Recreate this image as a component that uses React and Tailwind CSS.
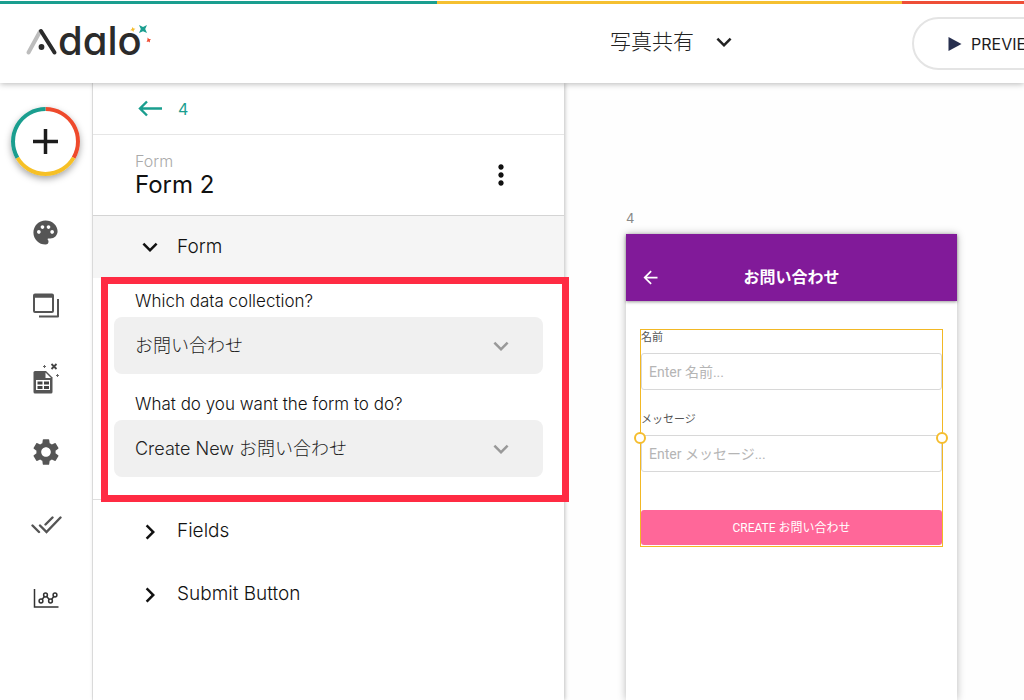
import React, { useState } from "react";
import {
  MdArrowBack,
  MdChevronRight,
  MdExpandMore,
  MdMoreVert,
  MdPalette,
  MdSettings,
} from "react-icons/md";

/* ---------------- ICONS ---------------- */

const Logo = () => (
  <div className="flex items-start text-[#2b2b2b]">
    <svg width="33" height="38" viewBox="0 0 33 38" fill="none" strokeWidth="4" strokeLinecap="round">
      <path d="M3.500 32.500 L15 11.500" stroke="#bdbdbd" />
      <path d="M16 11 L29.500 32.500" stroke="#2b2b2b" />
      <circle cx="16.500" cy="27" r="2.900" fill="#2b2b2b" />
    </svg>
    <span className="font-medium text-[40px] leading-[42px] [font-feature-settings:'cv11','ss03']">dalo</span>
    <svg width="24" height="24" viewBox="0 0 24 24" className="-ml-3.5">
      <path d="M4.500 7 L5.600 8.400 L7.500 8.800 L5.900 10 L5.400 12 L4.200 10.500 L2.200 10.300 L3.800 9 Z" fill="#f5bd2e" />
      <path d="M11 5 L15 7 L19 5 L17.200 9 L19 13 L15 11.200 L11 13 L12.800 9 Z" fill="#1a9e8f" />
      <path d="M19.600 17.600 L21 19 L23 19.200 L21.800 20.600 L22 22.600 L20.400 21.600 L18.600 22 L19.400 20 Z" fill="#ee4a30" />
    </svg>
  </div>
);

const ScreensIcon = () => (
  <svg width="28" height="26" viewBox="0 0 28 26" fill="none" stroke="#555" strokeWidth="2">
    <rect x="2" y="1.500" width="19" height="17.500" rx="1" />
    <path d="M2 3 H21" strokeWidth="3.500" />
    <path d="M7 23.500 H26 V6" strokeLinejoin="round" />
  </svg>
);

const DataIcon = () => (
  <svg width="28" height="34" viewBox="0 0 28 34">
    <path d="M3 9 H14 L20.500 15.500 V30 Q20.500 31.500 19 31.500 H3 Q1.500 31.500 1.500 30 V10.500 Q1.500 9 3 9 Z" fill="#555" />
    <path d="M13.500 10.500 V16 H19 Z" fill="#fff" />
    <rect x="4" y="18" width="14" height="10" fill="#fff" />
    <path d="M5.500 19.500 h5 v3 h-5z M12 19.500 h5 v3 h-5z M5.500 24 h5 v3 h-5z M12 24 h5 v3 h-5z" fill="#444" />
    <path d="M19.500 2 L24.500 7 M24.500 2 L19.500 7" stroke="#444" strokeWidth="1.800" />
    <path d="M12.500 3 v3 M11 4.500 h3 M25.500 12 v3 M24 13.500 h3" stroke="#666" strokeWidth="1" />
  </svg>
);

const PublishIcon = () => (
  <svg width="32" height="20" viewBox="0 0 32 20" fill="none" stroke="#555" strokeWidth="2.4" strokeLinecap="round">
    <path d="M2.500 10.500 L9 17 M10 10.500 L16.500 17 L30.500 2.500 M15.500 9.500 L22.500 2.500" />
  </svg>
);

const AnalyticsIcon = () => (
  <svg width="28" height="22" viewBox="0 0 28 22" fill="none" stroke="#333" strokeWidth="1.5">
    <path d="M2.500 2 V20 H26.500" />
    <path d="M10 12.500 L12.500 9.500 M14.700 9.500 L17.300 12.500 M19.500 12.500 L21.600 9.700" />
    <circle cx="9" cy="14" r="1.900" />
    <circle cx="13.500" cy="8" r="1.900" />
    <circle cx="18.500" cy="14" r="1.900" />
    <circle cx="23" cy="8" r="1.900" />
  </svg>
);

const AddRing = () => (
  <svg width="69" height="69" viewBox="0 0 69 69" fill="none" strokeWidth="4">
    <path d="M34.500 2 A32.500 32.500 0 0 1 62.600 50.800" stroke="#ee4a2c" />
    <path d="M62.600 50.800 A32.500 32.500 0 0 1 6.400 50.800" stroke="#f6c026" />
    <path d="M6.400 50.800 A32.500 32.500 0 0 1 34.500 2" stroke="#1a9e8f" />
    <path d="M34.500 22 V47 M22 34.500 H47" stroke="#1c1c1c" strokeWidth="3.500" />
  </svg>
);

/* ---------------- HEADER ---------------- */

const Header = () => (
  <header className="relative z-20 bg-white shadow-[0_1px_6px_rgba(0,0,0,0.28)]">
    <div className="flex h-1 pt-px">
      <div className="flex-[437] bg-[#1a9e8f]" />
      <div className="flex-[465] bg-[#f5c031]" />
      <div className="flex-[122] bg-[#ee4e37]" />
    </div>
    <div className="flex h-[79px] items-start overflow-hidden pl-[25px]">
      <a href="#home" aria-label="Adalo" className="pt-4">
        <Logo />
      </a>
      <div className="flex flex-1 justify-end pt-5 pr-[174px]">
        <button className="flex h-9 items-center gap-4 text-[21px] font-light text-[#222]">
          写真共有
          <MdExpandMore size={30} className="-mx-px" />
        </button>
      </div>
      <button className="-mr-12 mt-[13px] flex h-[53px] w-40 shrink-0 items-center gap-[9px] rounded-full border-2 border-[#e4e4e4] pl-[34px] text-base text-[#1c1c1c]">
        <svg width="14" height="16" viewBox="0 0 14 16">
          <path d="M0.500 1 L13.500 8 L0.500 15 Z" fill="#272f4f" />
        </svg>
        PREVIEW
      </button>
    </div>
  </header>
);

/* ---------------- LEFT TOOLBAR ---------------- */

const tools = [
  { name: "Branding", icon: <MdPalette size={29} /> },
  { name: "Screens", icon: <ScreensIcon /> },
  { name: "Database", icon: <DataIcon /> },
  { name: "Settings", icon: <MdSettings size={32} /> },
  { name: "Publish", icon: <PublishIcon /> },
  { name: "Analytics", icon: <AnalyticsIcon /> },
];

const Toolbar = () => (
  <nav className="flex w-[93px] shrink-0 flex-col items-center border-r border-[#e8e8e8] pt-6 pr-px text-[#555]">
    <button aria-label="Add" className="mb-5 rounded-full bg-white shadow-[0_3px_7px_rgba(0,0,0,0.35)]">
      <AddRing />
    </button>
    {tools.map((tool) => (
      <button key={tool.name} aria-label={tool.name} className="flex h-[73px] w-full items-center justify-center">
        {tool.icon}
      </button>
    ))}
  </nav>
);

/* ---------------- SETTINGS PANEL ---------------- */

const SelectField = ({ id, label, options }) => (
  <div className="flex flex-col gap-1">
    <label htmlFor={id} className="pl-[21px] text-[17px] leading-6 font-light text-[#111]">
      {label}
    </label>
    <div className="relative">
      <select
        id={id}
        className="h-[57px] w-full appearance-none rounded-lg bg-[#f0f0f0] pr-16 pl-[21px] text-lg font-light text-[#222]"
      >
        {options.map((option) => (
          <option key={option}>{option}</option>
        ))}
      </select>
      <MdExpandMore
        size={30}
        className="pointer-events-none absolute top-1/2 right-[27px] -translate-y-1/2 text-[#999]"
      />
    </div>
  </div>
);

const SectionRow = ({ title, open, onClick }) => (
  <button
    onClick={onClick}
    aria-expanded={open}
    className={
      open
        ? "flex h-[62px] w-full items-center gap-3 bg-[#f5f5f5] pl-[42px] text-[19px] font-light text-[#111]"
        : "flex h-[63px] w-full items-center gap-3 pl-[42px] text-[19px] font-light text-[#111]"
    }
  >
    {open ? <MdExpandMore size={30} /> : <MdChevronRight size={30} />}
    {title}
  </button>
);

const Panel = () => {
  const [open, setOpen] = useState("Form");
  const toggle = (name) => setOpen(open === name ? "" : name);

  return (
    <aside className="relative z-10 w-[471px] shrink-0 bg-white shadow-[1px_0_4px_rgba(0,0,0,0.25)]">
      <a
        href="#screen"
        className="flex h-[52px] items-center gap-4 border-b border-[#e6e6e6] pl-[45px] text-base text-[#1a9e8f]"
      >
        <svg width="24" height="18" viewBox="0 0 24 18" fill="none" stroke="currentColor" strokeWidth="2.400">
          <path d="M9 1.500 L2 8.500 L9 15.500 M2 8.500 H24" />
        </svg>
        4
      </a>

      <div className="flex h-[81px] items-center justify-between border-b border-[#d4d4d4] pr-[47px] pl-[42px]">
        <div>
          <p className="text-base leading-5 font-light text-[#aaa]">Form</p>
          <h1 className="text-2xl leading-7 text-[#111]">Form 2</h1>
        </div>
        <button aria-label="More options" className="text-[#111]">
          <MdMoreVert size={32} />
        </button>
      </div>

      <SectionRow title="Form" open={open === "Form"} onClick={() => toggle("Form")} />
      {open === "Form" && (
        <div className="relative flex flex-col gap-[18px] border-b border-[#dedede] px-[21px] pt-[11px] pb-[22px]">
          <SelectField id="collection" label="Which data collection?" options={["お問い合わせ"]} />
          <SelectField
            id="action"
            label="What do you want the form to do?"
            options={["Create New お問い合わせ"]}
          />
          {/* highlight frame */}
          <div className="pointer-events-none absolute -top-px -right-[5px] -bottom-[3px] left-2 border-[7px] border-[#ff2b43]" />
        </div>
      )}
      <SectionRow title="Fields" open={open === "Fields"} onClick={() => toggle("Fields")} />
      <SectionRow title="Submit Button" open={open === "Submit"} onClick={() => toggle("Submit")} />
    </aside>
  );
};

/* ---------------- CANVAS ---------------- */

const PhoneField = ({ id, label }) => (
  <div className="flex flex-col gap-[7px]">
    <label htmlFor={id} className="text-[11px] leading-4 text-[#555]">
      {label}
    </label>
    <input
      id={id}
      placeholder={`Enter ${label}...`}
      className="h-[37px] w-full rounded-[3px] border border-[#d8d8d8] px-[7px] text-sm placeholder:text-[#b5b5b5]"
    />
  </div>
);

const Canvas = () => (
  <main className="flex min-w-0 flex-1 flex-col overflow-hidden bg-[#fefefe] pt-[125px] pl-[62px]">
    <p className="mb-1.5 text-[13px] leading-5 text-[#888]">4</p>
    <div className="flex w-[331px] flex-1 flex-col bg-white font-[Roboto,'Noto_Sans_CJK_JP',sans-serif] shadow-[0_0_8px_rgba(0,0,0,0.28)]">
      <div className="relative flex h-[67px] items-center justify-center bg-[#811a99] pt-5 text-white shadow-[0_1px_3px_rgba(0,0,0,0.4)]">
        <button aria-label="Back" className="absolute left-[14px]">
          <MdArrowBack size={21} />
        </button>
        <h2 className="text-base font-bold">お問い合わせ</h2>
      </div>

      <form
        onSubmit={(e) => e.preventDefault()}
        className="relative mx-[14px] mt-7 flex flex-col gap-[22px] border border-[#f2b824] pb-px"
      >
        <PhoneField id="name" label="名前" />
        <PhoneField id="message" label="メッセージ" />
        <button className="mt-4 h-[35px] rounded-[3px] bg-[#ff6799] text-xs text-white">
          CREATE お問い合わせ
        </button>
        {/* resize handles */}
        <span className="absolute top-1/2 -left-[7px] size-3 -translate-y-1/2 rounded-full border-2 border-[#f5bd2e] bg-white" />
        <span className="absolute top-1/2 -right-[6px] size-3 -translate-y-1/2 rounded-full border-2 border-[#f5bd2e] bg-white" />
      </form>
    </div>
  </main>
);

export default function App() {
  return (
    <div
      lang="ja"
      className="flex min-h-screen flex-col overflow-hidden bg-white font-[Inter,'Noto_Sans_CJK_JP',sans-serif]"
    >
      <Header />
      <div className="flex flex-1">
        <Toolbar />
        <Panel />
        <Canvas />
      </div>
    </div>
  );
}
